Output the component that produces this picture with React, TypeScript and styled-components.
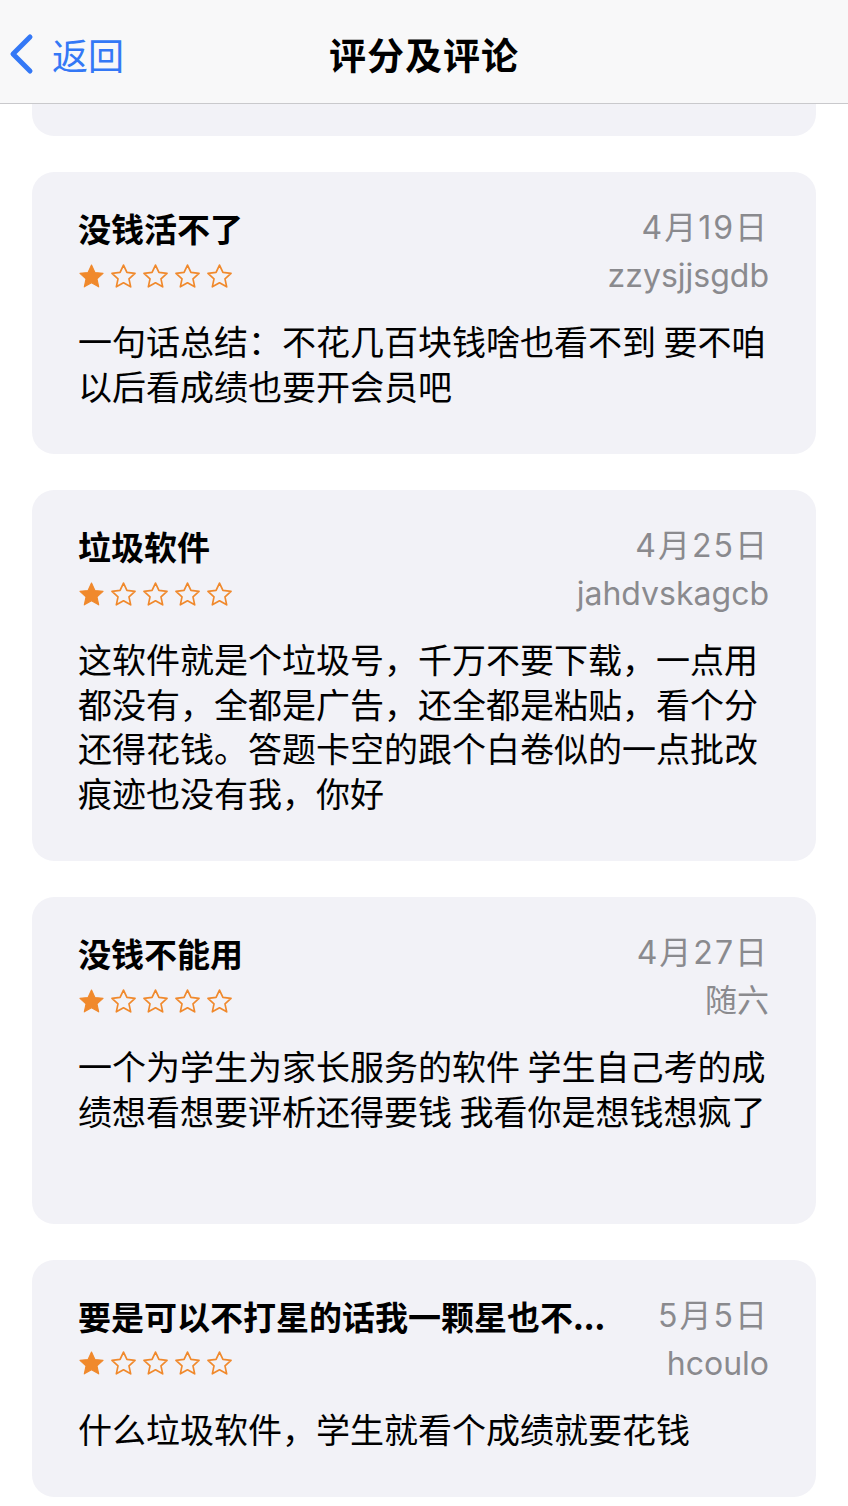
import React from "react";
import styled, { createGlobalStyle } from "styled-components";

const Global = createGlobalStyle`
  html, body { margin: 0; padding: 0; background: #ffffff; }
  body { font-family: Inter, "Noto Sans CJK SC", sans-serif; -webkit-font-smoothing: antialiased; }
  * { box-sizing: border-box; }
`;

const Page = styled.div`
  width: 848px;
  min-height: 1506px;
  background: #ffffff;
  display: flex;
  flex-direction: column;
  overflow: hidden;
`;

const NavBar = styled.header`
  height: 104px;
  flex: none;
  background: #f8f8f9;
  border-bottom: 1px solid #c9c9cc;
  display: grid;
  grid-template-columns: 1fr auto 1fr;
  align-items: center;
  padding-top: 4px;
`;

const BackButton = styled.div`
  display: flex;
  align-items: center;
  gap: 18px;
  padding-left: 8px;
  color: #3478f6;
  font-size: 36px;
  font-family: "Noto Sans CJK SC", sans-serif;
`;

const NavTitle = styled.h1`
  margin: 0;
  font-size: 37px;
  font-weight: 700;
  color: #000;
  font-family: "Noto Sans CJK SC", sans-serif;
  letter-spacing: 1px;
`;

const List = styled.div`
  display: flex;
  flex-direction: column;
  gap: 36px;
  padding: 0 32px;
`;

const CardTail = styled.div`
  height: 32px;
  background: #f2f2f7;
  border-radius: 0 0 22px 22px;
`;

const Card = styled.div`
  background: #f2f2f7;
  border-radius: 22px;
  padding: 32px 47px 46px 46px;
  display: flex;
  flex-direction: column;
`;

const Row = styled.div`
  display: flex;
  align-items: center;
  justify-content: space-between;
  gap: 36px;
`;

const Title = styled.div`
  font-family: "Noto Sans CJK SC", sans-serif;
  font-size: 33px;
  font-weight: 700;
  color: #000;
  line-height: 48px;
  white-space: nowrap;
  min-width: 0;
`;

const Meta = styled.div<{ $spaced?: boolean }>`
  font-family: Inter, "Noto Sans CJK SC", sans-serif;
  font-size: 32px;
  color: #8a8a8e;
  line-height: 46px;
  white-space: nowrap;
  flex: none;
  letter-spacing: ${(p) => (p.$spaced ? "2px" : "0")};
`;

const Stars = styled.div`
  display: flex;
  gap: 5px;
  height: 48px;
  align-items: center;
`;

const Body = styled.p`
  margin: 19px 0 0;
  font-family: "Noto Sans CJK SC", sans-serif;
  font-size: 34px;
  line-height: 44.5px;
  color: #000;
  white-space: pre-wrap;
`;

const Star: React.FC<{ filled: boolean }> = ({ filled }) => (
  <svg width="27" height="27" viewBox="0 0 24 24">
    <path
      d="M12 1.8l3.05 6.6 7.2.8-5.37 4.9 1.5 7.1L12 17.6 5.62 21.2l1.5-7.1L1.75 9.2l7.2-.8z"
      fill={filled ? "#f0892c" : "none"}
      stroke="#f0892c"
      strokeWidth={filled ? 1 : 1.5}
      strokeLinejoin="round"
    />
  </svg>
);

type Review = { title: string; date: string; author: string; text: string };

const reviews: Review[] = [
  {
    title: "没钱活不了",
    date: "4月19日",
    author: "zzysjjsgdb",
    text: "一句话总结：不花几百块钱啥也看不到 要不咱以后看成绩也要开会员吧",
  },
  {
    title: "垃圾软件",
    date: "4月25日",
    author: "jahdvskagcb",
    text: "这软件就是个垃圾号，千万不要下载，一点用都没有，全都是广告，还全都是粘贴，看个分还得花钱。答题卡空的跟个白卷似的一点批改痕迹也没有我，你好",
  },
  {
    title: "没钱不能用",
    date: "4月27日",
    author: "随六",
    text: "一个为学生为家长服务的软件 学生自己考的成绩想看想要评析还得要钱 我看你是想钱想疯了\n\u00a0",
  },
  {
    title: "要是可以不打星的话我一颗星也不...",
    date: "5月5日",
    author: "hcoulo",
    text: "什么垃圾软件，学生就看个成绩就要花钱",
  },
];

export default function App() {
  return (
    <Page>
      <Global />
      <NavBar>
        <BackButton>
          <svg width="26" height="42" viewBox="0 0 26 42">
            <path d="M22 4 L5 21 L22 38" fill="none" stroke="#3478f6" strokeWidth="5" strokeLinecap="round" strokeLinejoin="round" />
          </svg>
          <span>返回</span>
        </BackButton>
        <NavTitle>评分及评论</NavTitle>
        <div />
      </NavBar>
      <List>
        <CardTail />
        {reviews.map((r) => (
          <Card key={r.title}>
            <Row>
              <Title>{r.title}</Title>
              <Meta $spaced>{r.date}</Meta>
            </Row>
            <Row>
              <Stars>
                {[0, 1, 2, 3, 4].map((i) => (
                  <Star key={i} filled={i === 0} />
                ))}
              </Stars>
              <Meta>{r.author}</Meta>
            </Row>
            <Body>{r.text}</Body>
          </Card>
        ))}
      </List>
    </Page>
  );
}
